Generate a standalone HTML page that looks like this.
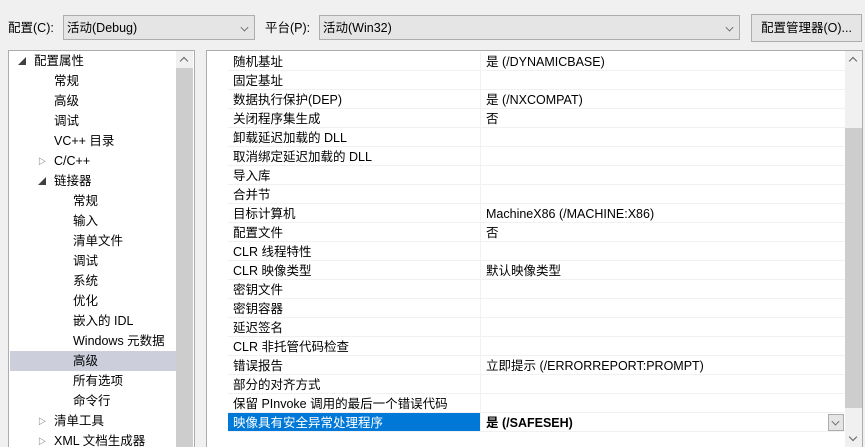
<!DOCTYPE html>
<html><head><meta charset="utf-8"><style>
*{margin:0;padding:0;box-sizing:border-box}
html,body{width:865px;height:447px;overflow:hidden}
body{background:#f0f0f0;font-family:"Liberation Sans","Noto Sans CJK SC",sans-serif;font-size:12.5px;color:#000;position:relative}
.a{position:absolute;white-space:nowrap}
.combo{position:absolute;background:#e5e5e5;border:1px solid #adadad;height:25px;line-height:24px;padding-left:3px}
.chev{position:absolute;right:6px;top:8px;width:7px;height:7px;border-right:1px solid #606060;border-bottom:1px solid #606060;transform:rotate(45deg) scale(.8,.8)}
.tree{position:absolute;left:8px;top:50px;width:187px;height:400px;background:#fff;border:1px solid #acacac}
.tr{position:absolute;left:1px;width:166px;height:20px;line-height:21px}
.grid{position:absolute;left:206px;top:50px;width:657px;height:400px;background:#fff;border:1px solid #acacac}
.row{position:absolute;left:21px;width:617px;height:19px;line-height:20px;border-bottom:1px solid #f0f0f5}
.row .n{position:absolute;left:0;width:253px;height:18px;padding-left:5px;border-right:1px solid #f0f0f5}
.row .v{position:absolute;left:254px;padding-left:4px}
.sb{position:absolute;width:17px;background:#f0f0f0}
.th{position:absolute;left:0;width:17px;background:#cdcdcd}
.up{position:absolute;left:5px;width:6px;height:6px;border-left:1.5px solid #606060;border-top:1.5px solid #606060;transform:rotate(45deg)}
.dn{position:absolute;left:5px;width:6px;height:6px;border-right:1.5px solid #606060;border-bottom:1.5px solid #606060;transform:rotate(45deg)}
.tri{position:absolute;font-size:8px;color:#404040}
</style></head><body>
<div class="a" style="left:8px;top:17px">配置(C):</div>
<div class="combo" style="left:63px;top:15px;width:192px">活动(Debug)<span class="chev"></span></div>
<div class="a" style="left:265px;top:17px">平台(P):</div>
<div class="combo" style="left:319px;top:15px;width:421px">活动(Win32)<span class="chev"></span></div>
<div class="combo" style="left:751px;top:14px;width:111px;height:28px;line-height:27px;padding-left:9px">配置管理器(O)...</div>

<div class="tree">
<div class="tr" style="top:0"><span class="tri" style="left:8px;top:0">◢</span><span class="a" style="left:24px">配置属性</span></div>
<div class="tr" style="top:20px"><span class="a" style="left:44px">常规</span></div>
<div class="tr" style="top:40px"><span class="a" style="left:44px">高级</span></div>
<div class="tr" style="top:60px"><span class="a" style="left:44px">调试</span></div>
<div class="tr" style="top:80px"><span class="a" style="left:44px">VC++ 目录</span></div>
<div class="tr" style="top:100px"><span class="tri" style="left:28px">▷</span><span class="a" style="left:44px">C/C++</span></div>
<div class="tr" style="top:120px"><span class="tri" style="left:28px">◢</span><span class="a" style="left:44px">链接器</span></div>
<div class="tr" style="top:140px"><span class="a" style="left:63px">常规</span></div>
<div class="tr" style="top:160px"><span class="a" style="left:63px">输入</span></div>
<div class="tr" style="top:180px"><span class="a" style="left:63px">清单文件</span></div>
<div class="tr" style="top:200px"><span class="a" style="left:63px">调试</span></div>
<div class="tr" style="top:220px"><span class="a" style="left:63px">系统</span></div>
<div class="tr" style="top:240px"><span class="a" style="left:63px">优化</span></div>
<div class="tr" style="top:260px"><span class="a" style="left:63px">嵌入的 IDL</span></div>
<div class="tr" style="top:280px"><span class="a" style="left:63px">Windows 元数据</span></div>
<div class="tr" style="top:300px;background:#cccedb"><span class="a" style="left:63px">高级</span></div>
<div class="tr" style="top:320px"><span class="a" style="left:63px">所有选项</span></div>
<div class="tr" style="top:340px"><span class="a" style="left:63px">命令行</span></div>
<div class="tr" style="top:360px"><span class="tri" style="left:28px">▷</span><span class="a" style="left:44px">清单工具</span></div>
<div class="tr" style="top:380px"><span class="tri" style="left:28px">▷</span><span class="a" style="left:44px">XML 文档生成器</span></div>
<div class="sb" style="left:167px;top:0;height:400px"><span class="up" style="top:7px"></span><div class="th" style="top:17px;height:390px"></div></div>
</div>

<div class="grid">
<div class="row" style="top:1px"><div class="n">随机基址</div><div class="v">是 (/DYNAMICBASE)</div></div>
<div class="row" style="top:20px"><div class="n">固定基址</div></div>
<div class="row" style="top:39px"><div class="n">数据执行保护(DEP)</div><div class="v">是 (/NXCOMPAT)</div></div>
<div class="row" style="top:58px"><div class="n">关闭程序集生成</div><div class="v">否</div></div>
<div class="row" style="top:77px"><div class="n">卸载延迟加载的 DLL</div></div>
<div class="row" style="top:96px"><div class="n">取消绑定延迟加载的 DLL</div></div>
<div class="row" style="top:115px"><div class="n">导入库</div></div>
<div class="row" style="top:134px"><div class="n">合并节</div></div>
<div class="row" style="top:153px"><div class="n">目标计算机</div><div class="v">MachineX86 (/MACHINE:X86)</div></div>
<div class="row" style="top:172px"><div class="n">配置文件</div><div class="v">否</div></div>
<div class="row" style="top:191px"><div class="n">CLR 线程特性</div></div>
<div class="row" style="top:210px"><div class="n">CLR 映像类型</div><div class="v">默认映像类型</div></div>
<div class="row" style="top:229px"><div class="n">密钥文件</div></div>
<div class="row" style="top:248px"><div class="n">密钥容器</div></div>
<div class="row" style="top:267px"><div class="n">延迟签名</div></div>
<div class="row" style="top:286px"><div class="n">CLR 非托管代码检查</div></div>
<div class="row" style="top:305px"><div class="n">错误报告</div><div class="v">立即提示 (/ERRORREPORT:PROMPT)</div></div>
<div class="row" style="top:324px"><div class="n">部分的对齐方式</div></div>
<div class="row" style="top:343px"><div class="n">保留 PInvoke 调用的最后一个错误代码</div></div>
<div class="row" style="top:362px"><div class="n" style="background:#0078d7;color:#fff">映像具有安全异常处理程序</div><div class="v" style="font-weight:bold">是 (/SAFESEH)</div>
<div style="position:absolute;left:600px;top:1px;width:16px;height:17px;background:#e5e5e5;border:1px solid #adadad"><span class="chev" style="right:4px;top:3px"></span></div></div>
<div class="sb" style="left:638px;top:0;height:400px"><span class="up" style="top:7px"></span><div class="th" style="top:77px;height:280px"></div><span class="dn" style="top:383px"></span></div>
</div>
</body></html>
